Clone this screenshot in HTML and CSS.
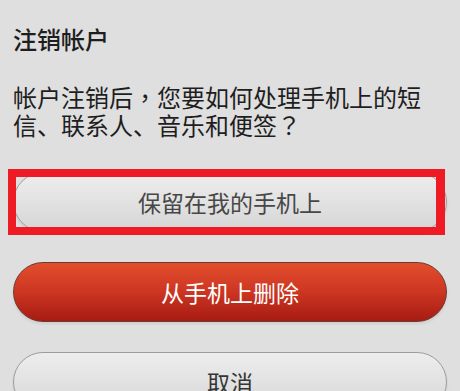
FILE: index.html
```html
<!DOCTYPE html>
<html lang="zh-CN">
<head>
<meta charset="utf-8">
<title>注销帐户</title>
<link rel="stylesheet" href="styles.css">
</head>
<body>
<div class="dialog">
  <h1 class="title">注销帐户</h1>
  <p class="message">帐户注销后<span class="punct">，</span>您要如何处理手机上的短信、联系人、音乐和便签<span class="punct">？</span></p>
  <div class="actions">
    <div class="highlight-wrap">
      <button class="btn btn-light">保留在我的手机上</button>
      <span class="highlight"></span>
    </div>
    <button class="btn btn-danger">从手机上删除</button>
    <button class="btn btn-light btn-cancel">取消</button>
  </div>
</div>
</body>
</html>
```

FILE: styles.css
```css
html, body {
  margin: 0;
  padding: 0;
}
body {
  width: 460px;
  height: 391px;
  overflow: hidden;
  background: #dfdfdf;
  font-family: "Noto Sans CJK SC", "Noto Sans", sans-serif;
  color: #222;
  text-spacing-trim: space-all;
}
.dialog {
  padding: 24px 13px 0 13px;
}
.title {
  margin: 0;
  font-size: 24px;
  line-height: 30px;
  font-weight: 500;
  color: #1e1e1e;
}
.message {
  margin: 29px 14px 0 0;
  font-size: 24px;
  line-height: 28px;
  font-weight: 400;
  color: #1e1e1e;
}
.punct {
  display: inline-block;
  width: 1em;
  text-align: center;
  font-family: "Noto Sans CJK TC", "Noto Sans CJK SC", sans-serif;
}
.actions {
  margin-top: 33px;
  display: flex;
  flex-direction: column;
  gap: 30px;
}
.highlight-wrap {
  position: relative;
}
.btn {
  display: block;
  width: 434px;
  height: 60px;
  border-radius: 30px;
  font-family: "Noto Sans CJK SC", "Noto Sans", sans-serif;
  font-size: 23px;
  line-height: 30px;
  padding: 0;
  margin: 0;
  box-sizing: border-box;
  cursor: pointer;
  box-shadow: 0 2px 3px rgba(0, 0, 0, 0.08);
}
.btn-light {
  border: 1px solid #9c9c9c;
  background: linear-gradient(to bottom, #ededed 0%, #e2e2e2 50%, #d5d5d5 100%);
  color: #474747;
}
.btn-cancel {
  color: #353535;
}
.btn-danger {
  border: 1px solid #6b3b30;
  background: linear-gradient(to bottom, #e24e2d 0%, #cc3622 50%, #a71b12 100%);
  color: #ffffff;
}
.highlight {
  position: absolute;
  left: -5px;
  top: -3px;
  right: 2px;
  bottom: -3px;
  border: 8px solid #ee1b24;
  border-right-width: 9px;
  pointer-events: none;
}
```
